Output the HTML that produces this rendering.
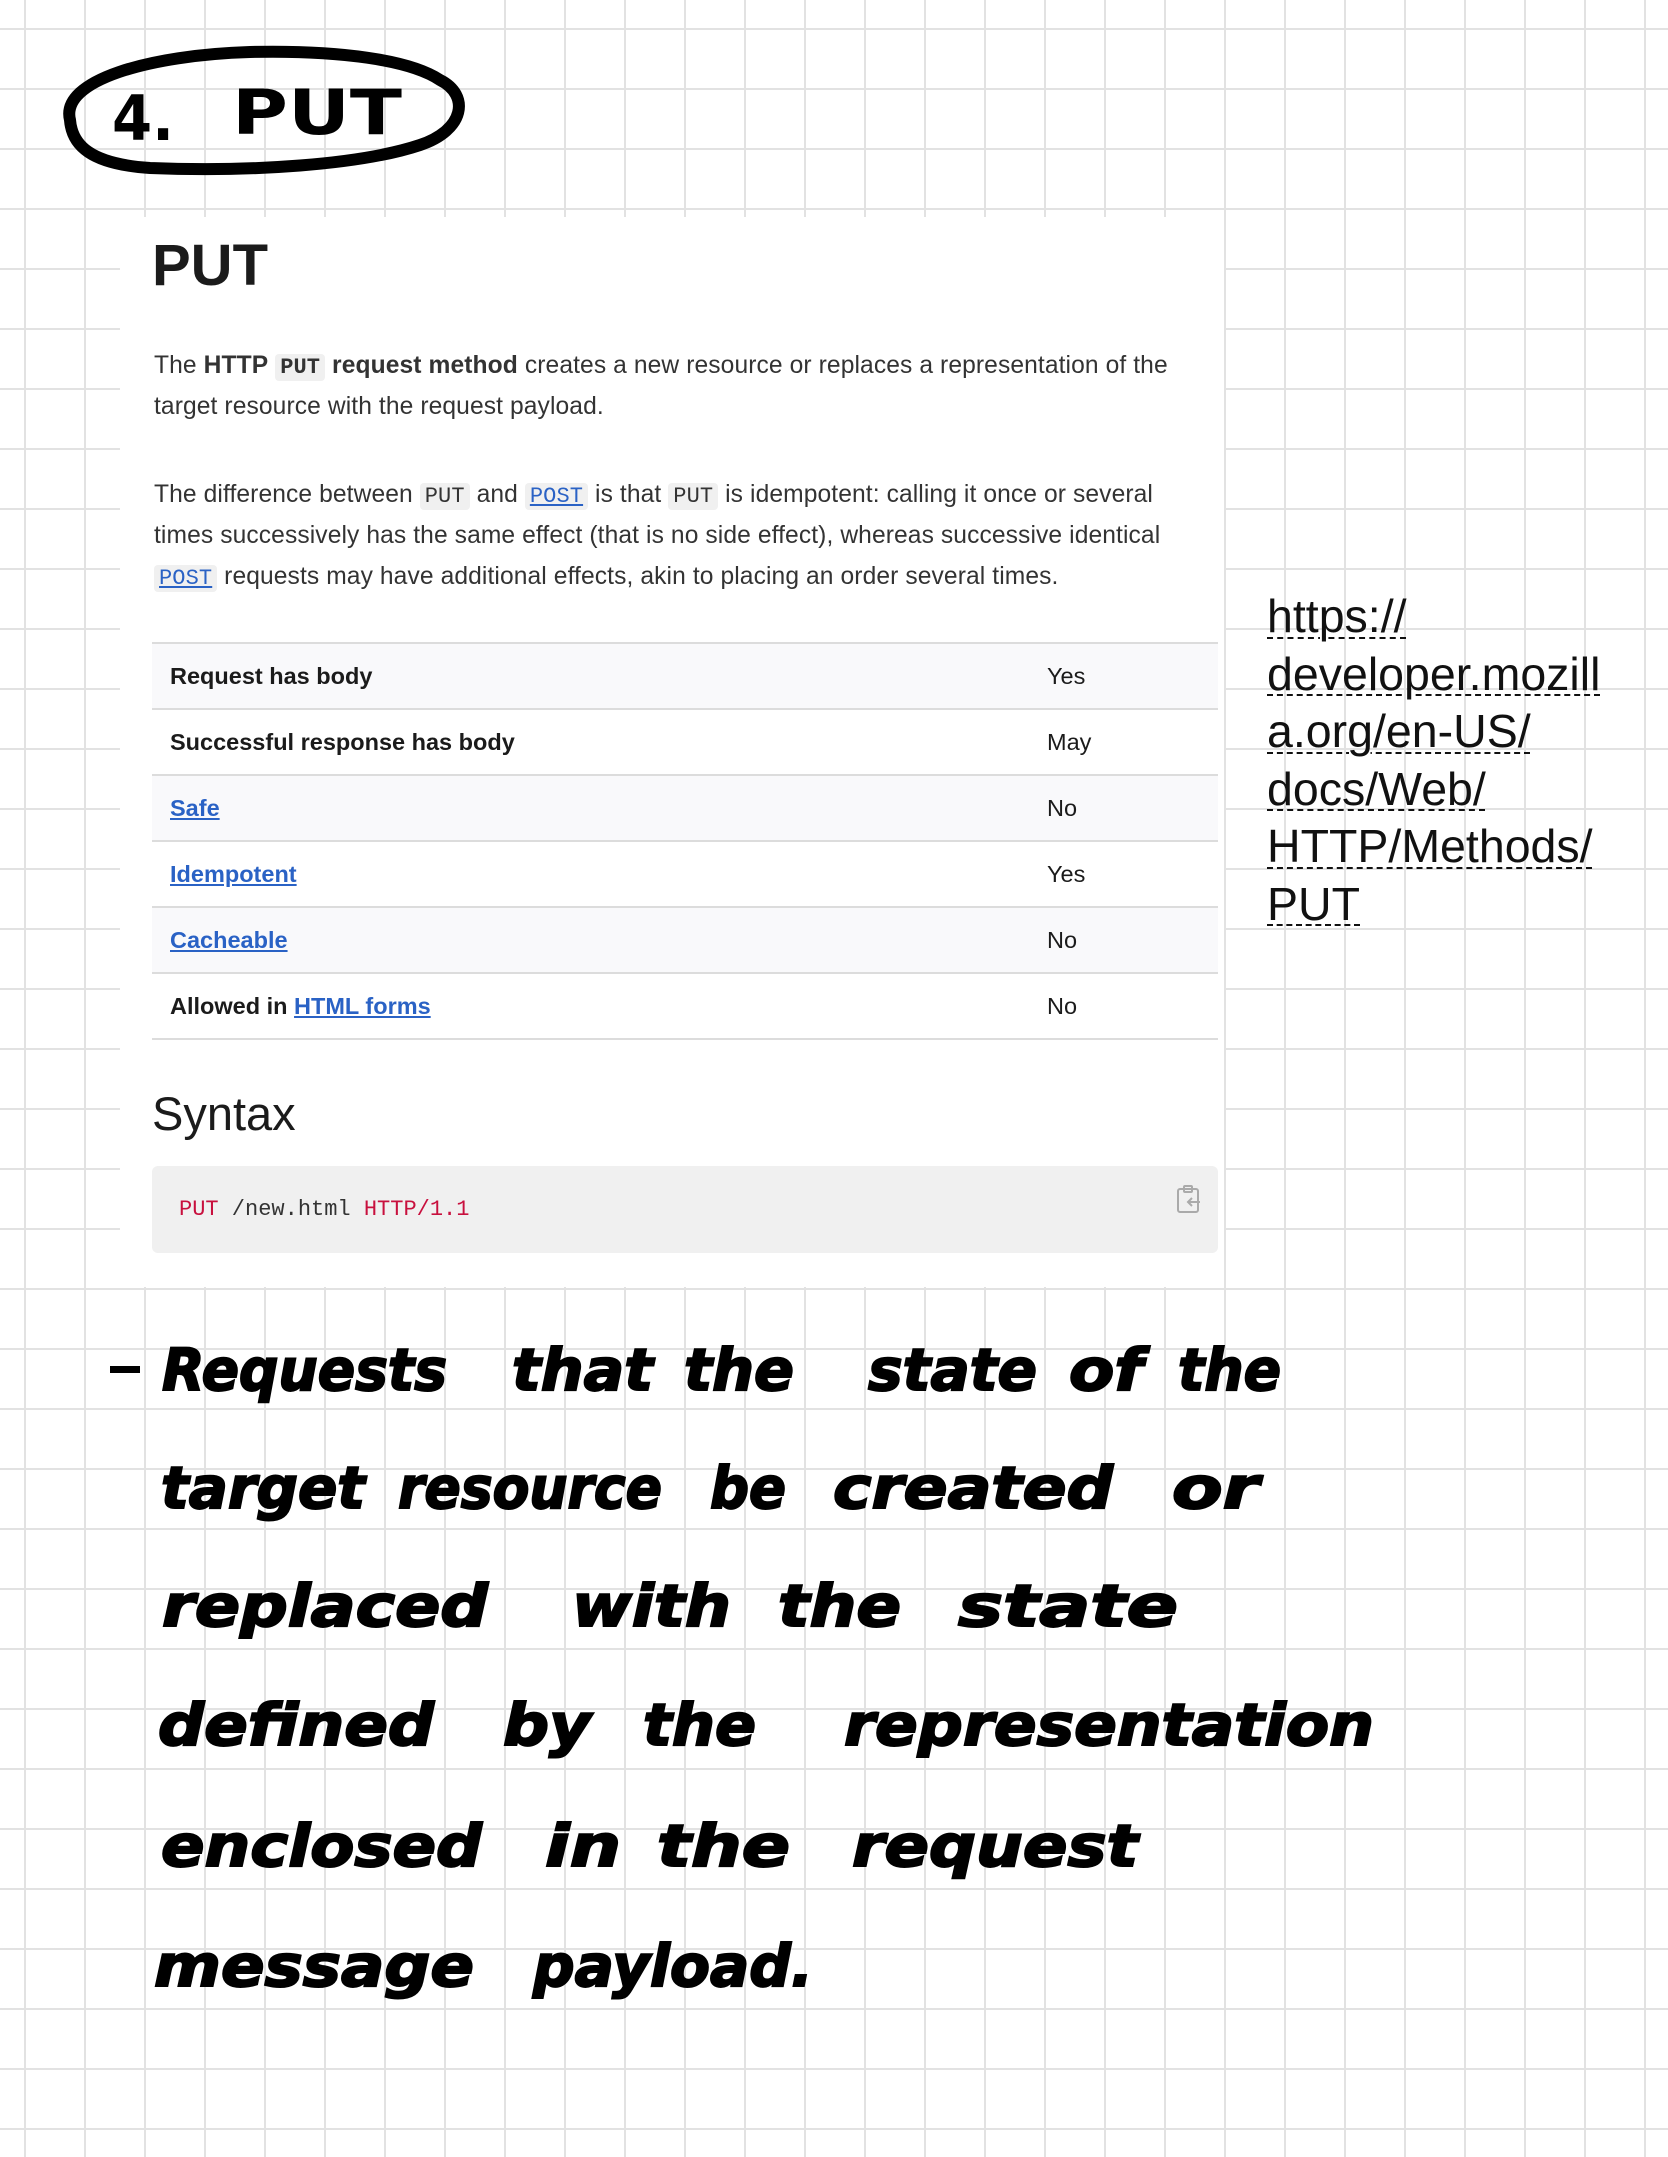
<!DOCTYPE html>
<html><head><meta charset="utf-8"><style>
html,body{margin:0;padding:0}
body{width:1668px;height:2157px;position:relative;overflow:hidden;background:#fff;
background-image:linear-gradient(#e2e2e2 2px,transparent 2px),linear-gradient(90deg,#e2e2e2 2px,transparent 2px);
background-size:60px 60px;background-position:0 28px,24px 0;font-family:"Liberation Sans",sans-serif}
.card{position:absolute;left:120px;top:217px;width:1104px;height:1070px;background:#fff}
.a{position:absolute;white-space:nowrap}
.p{font-size:24.6px;color:#333;letter-spacing:0.1px}
.c{font-family:"Liberation Mono",monospace;background:#f0f0f0;border-radius:4px;padding:1px 5px;font-size:22px;color:#333}
.l{color:#2a62c5;text-decoration:underline}
.row{position:absolute;left:152px;width:1066px;height:64px;border-bottom:2px solid #dcdcdc;font-size:23.5px;color:#1b1b1b}
.row .k{position:absolute;left:18px;top:19px;font-weight:bold}
.row .v{position:absolute;left:895px;top:19px}
.g{background:#f9f9fb}
.url{position:absolute;left:1267px;top:588px;font-size:46.5px;line-height:57.5px;color:#111;text-decoration:underline dashed;text-decoration-thickness:2px;text-underline-offset:5px}
</style></head><body>
<div class="card"></div>
<div class="a" style="left:152px;top:232px;font-size:58px;font-weight:bold;color:#1b1b1b">PUT</div>
<div class="a p" style="left:154px;top:352px">The <b>HTTP</b> <span class="c"><b>PUT</b></span> <b>request method</b> creates a new resource or replaces a representation of the</div>
<div class="a p" style="left:154px;top:393px">target resource with the request payload.</div>
<div class="a p" style="left:154px;top:481px">The difference between <span class="c">PUT</span> and <span class="c l">POST</span> is that <span class="c">PUT</span> is idempotent: calling it once or several</div>
<div class="a p" style="left:154px;top:522px">times successively has the same effect (that is no side effect), whereas successive identical</div>
<div class="a p" style="left:154px;top:563px"><span class="c l">POST</span> requests may have additional effects, akin to placing an order several times.</div>
<div style="position:absolute;left:152px;top:642px;width:1066px;border-top:2px solid #dcdcdc"></div>
<div class="row g" style="top:644px"><span class="k">Request has body</span><span class="v">Yes</span></div>
<div class="row" style="top:710px"><span class="k">Successful response has body</span><span class="v">May</span></div>
<div class="row g" style="top:776px"><span class="k l">Safe</span><span class="v">No</span></div>
<div class="row" style="top:842px"><span class="k l">Idempotent</span><span class="v">Yes</span></div>
<div class="row g" style="top:908px"><span class="k l">Cacheable</span><span class="v">No</span></div>
<div class="row" style="top:974px"><span class="k">Allowed in <span class="l">HTML forms</span></span><span class="v">No</span></div>
<div class="a" style="left:152px;top:1086px;font-size:47px;color:#1b1b1b">Syntax</div>
<div style="position:absolute;left:152px;top:1166px;width:1066px;height:87px;background:#f0f0f0;border-radius:6px"></div>
<div class="a" style="left:179px;top:1197px;font-family:'Liberation Mono',monospace;font-size:22px;color:#333"><span style="color:#c8103e">PUT</span> /new.html <span style="color:#c8103e">HTTP/1.1</span></div>
<svg style="position:absolute;left:1176px;top:1184px" width="26" height="30" viewBox="0 0 26 30" fill="none" stroke="#aaa" stroke-width="2"><rect x="2" y="5" width="20" height="23" rx="2"/><rect x="8" y="2" width="8" height="6" rx="1"/><path d="M24 18H12M16 14l-4 4 4 4"/></svg>
<div class="url">https://<br>developer.mozill<br>a.org/en-US/<br>docs/Web/<br>HTTP/Methods/<br>PUT</div>
<svg style="position:absolute;left:0;top:0" width="1668" height="2157" viewBox="0 0 1668 2157">
<path d="M70 120 C60 80 150 55 250 52 C340 50 410 60 440 80 C470 95 465 130 420 145 C360 165 250 172 150 168 C90 164 72 145 70 120 Z" fill="none" stroke="#000" stroke-width="12"/>
<g font-family="'DejaVu Sans',sans-serif" font-weight="bold" fill="#000">
<text x="112" y="140" font-size="62" textLength="62" lengthAdjust="spacingAndGlyphs">4.</text>
<text x="232" y="134" font-size="62" textLength="170" lengthAdjust="spacingAndGlyphs">PUT</text>
</g>
<rect x="110" y="1366" width="30" height="7" fill="#000"/>
<g font-family="'DejaVu Sans',sans-serif" font-weight="bold" font-style="italic" font-size="58" fill="#000" stroke="#000" stroke-width="2">
<text x="162" y="1390" textLength="285" lengthAdjust="spacingAndGlyphs">Requests</text>
<text x="512" y="1390" textLength="141" lengthAdjust="spacingAndGlyphs">that</text>
<text x="684" y="1390" textLength="110" lengthAdjust="spacingAndGlyphs">the</text>
<text x="868" y="1390" textLength="169" lengthAdjust="spacingAndGlyphs">state</text>
<text x="1069" y="1390" textLength="74" lengthAdjust="spacingAndGlyphs">of</text>
<text x="1178" y="1390" textLength="103" lengthAdjust="spacingAndGlyphs">the</text>
<text x="161" y="1508" textLength="204" lengthAdjust="spacingAndGlyphs">target</text>
<text x="398" y="1508" textLength="264" lengthAdjust="spacingAndGlyphs">resource</text>
<text x="710" y="1508" textLength="76" lengthAdjust="spacingAndGlyphs">be</text>
<text x="833" y="1508" textLength="280" lengthAdjust="spacingAndGlyphs">created</text>
<text x="1172" y="1508" textLength="87" lengthAdjust="spacingAndGlyphs">or</text>
<text x="162" y="1626" textLength="326" lengthAdjust="spacingAndGlyphs">replaced</text>
<text x="572" y="1626" textLength="159" lengthAdjust="spacingAndGlyphs">with</text>
<text x="778" y="1626" textLength="123" lengthAdjust="spacingAndGlyphs">the</text>
<text x="958" y="1626" textLength="220" lengthAdjust="spacingAndGlyphs">state</text>
<text x="158" y="1745" textLength="276" lengthAdjust="spacingAndGlyphs">defined</text>
<text x="503" y="1745" textLength="88" lengthAdjust="spacingAndGlyphs">by</text>
<text x="643" y="1745" textLength="113" lengthAdjust="spacingAndGlyphs">the</text>
<text x="844" y="1745" textLength="530" lengthAdjust="spacingAndGlyphs">representation</text>
<text x="161" y="1866" textLength="321" lengthAdjust="spacingAndGlyphs">enclosed</text>
<text x="545" y="1866" textLength="76" lengthAdjust="spacingAndGlyphs">in</text>
<text x="657" y="1866" textLength="133" lengthAdjust="spacingAndGlyphs">the</text>
<text x="852" y="1866" textLength="286" lengthAdjust="spacingAndGlyphs">request</text>
<text x="154" y="1986" textLength="320" lengthAdjust="spacingAndGlyphs">message</text>
<text x="533" y="1986" textLength="280" lengthAdjust="spacingAndGlyphs">payload.</text>
</g>
</svg>
</body></html>
